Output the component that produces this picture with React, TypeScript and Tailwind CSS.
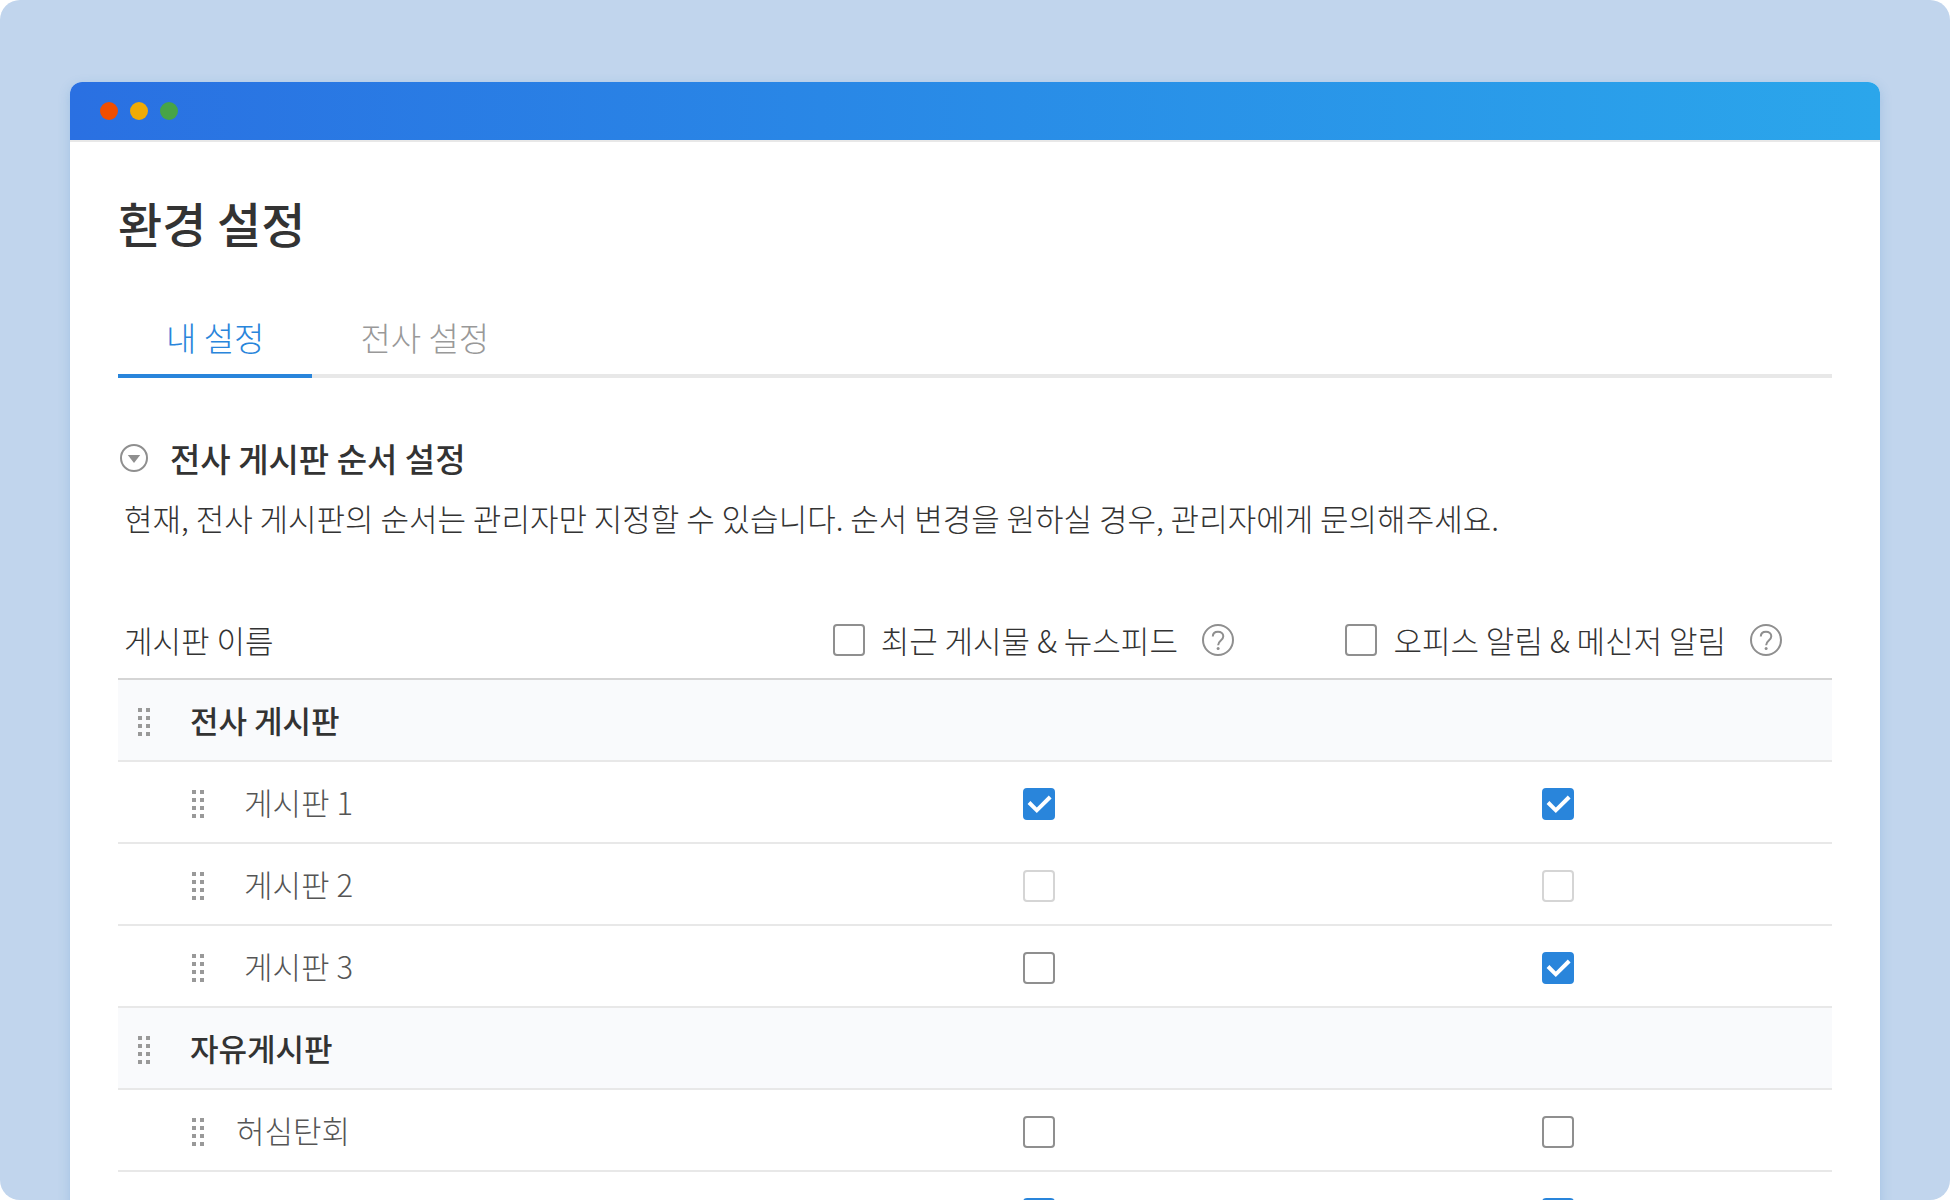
import React, { useState } from 'react';
import clsx from 'clsx';

type CheckState = 'on' | 'off' | 'disabled';

interface BoardRow {
  name: string;
  kind: 'group' | 'board';
  compact?: boolean;
  feed?: CheckState;
  alarm?: CheckState;
}

const rows: BoardRow[] = [
  { name: '전사 게시판', kind: 'group' },
  { name: '게시판 1', kind: 'board', feed: 'on', alarm: 'on' },
  { name: '게시판 2', kind: 'board', feed: 'disabled', alarm: 'disabled' },
  { name: '게시판 3', kind: 'board', feed: 'off', alarm: 'on' },
  { name: '자유게시판', kind: 'group' },
  { name: '허심탄회', kind: 'board', compact: true, feed: 'off', alarm: 'off' },
  { name: '', kind: 'board', feed: 'on', alarm: 'on' }
];

const tabs = ['내 설정', '전사 설정'];

const Checkbox: React.FC<{ state?: CheckState; id?: string; label?: string }> = ({ state = 'off', id, label }) => {
  const [checked, setChecked] = useState(state === 'on');

  return (
    <span className="relative block size-8 shrink-0">
      <input
        id={id}
        type="checkbox"
        aria-label={label}
        checked={checked}
        disabled={state === 'disabled'}
        onChange={(e) => setChecked(e.target.checked)}
        className="block size-8 appearance-none rounded border-2 border-[#8f8f8f] bg-white checked:border-[#2985db] checked:bg-[#2985db] disabled:border-[#d5d5d5]"
      />
      {checked && (
        <svg viewBox="0 0 32 32" className="pointer-events-none absolute inset-0 size-8" fill="none" stroke="white" strokeWidth="4">
          <path d="M6 14.5 13.8 22.3 27.2 9" />
        </svg>
      )}
    </span>
  );
};

const DragHandle: React.FC = () => (
  <button type="button" aria-label="순서 변경" className="mt-1 block shrink-0 cursor-move">
    <svg width="12" height="28" viewBox="0 0 12 28" fill="#999" className="block">
      {[0, 8, 16, 24].map((y) => (
        <React.Fragment key={y}>
          <rect x="0" y={y} width="4" height="4" />
          <rect x="8" y={y} width="4" height="4" />
        </React.Fragment>
      ))}
    </svg>
  </button>
);

const HelpButton: React.FC = () => (
  <button type="button" aria-label="도움말" className="block shrink-0">
    <svg width="32" height="32" viewBox="0 0 32 32" fill="none" stroke="#8f8f8f" strokeWidth="2" className="block">
      <circle cx="16" cy="16" r="15" />
      <path d="M10.8 12.6C10.8 9.6 13 7.8 16 7.8s5.3 1.8 5.3 4.5c0 4.2-5.2 4.2-5.2 8.9" />
      <circle cx="16.1" cy="24.6" r="1.5" fill="#8f8f8f" stroke="none" />
    </svg>
  </button>
);

const HeaderCheck: React.FC<{ id: string; text: string }> = ({ id, text }) => (
  <div className="flex items-center justify-center whitespace-nowrap">
    <Checkbox id={id} />
    <label htmlFor={id} className="pl-4 pr-6">
      {text}
    </label>
    <HelpButton />
  </div>
);

const App: React.FC = () => {
  const [activeTab, setActiveTab] = useState(0);
  const [open, setOpen] = useState(true);

  return (
    <div className="bg-white">
      <div className="h-screen overflow-hidden rounded-[20px] bg-[#c1d5ed] px-[70px] pt-[82px] font-['Noto_Sans_CJK_KR',sans-serif] text-[#333]">
        <div className="min-h-full overflow-hidden rounded-t-xl bg-white shadow-[0_4px_12px_rgba(60,130,200,0.25)]">
          {/* Title bar */}
          <div className="flex h-15 items-center gap-3 border-b-2 border-[#e8e8e8] bg-linear-to-r from-[#2a70e2] to-[#2ba6eb] px-[30px]">
            <span className="size-[18px] rounded-full bg-[#f04e00]" />
            <span className="size-[18px] rounded-full bg-[#f0ab05]" />
            <span className="size-[18px] rounded-full bg-[#47a447]" />
          </div>

          <main className="px-12 pt-12">
            <h1 className="text-[48px] leading-[64px] font-medium">환경 설정</h1>

            {/* Tabs */}
            <div role="tablist" className="mt-[54px] flex border-b-4 border-[#e8e8e8]">
              {tabs.map((tab, index) => (
                <button
                  key={tab}
                  type="button"
                  role="tab"
                  aria-selected={activeTab === index}
                  onClick={() => setActiveTab(index)}
                  className={clsx(
                    '-mb-1 border-b-4 px-12 pb-2 text-[33px] leading-[58px] font-light',
                    activeTab === index ? 'border-[#2985db] text-[#2985db]' : 'border-transparent text-[#999]'
                  )}
                >
                  {tab}
                </button>
              ))}
            </div>

            {/* Board order */}
            <section className="pt-14">
              <div className="flex items-center gap-[22px] pl-0.5">
                <button type="button" aria-label="접기" aria-expanded={open} onClick={() => setOpen(!open)}>
                  <svg width="28" height="28" viewBox="0 0 28 28" className="block">
                    <circle cx="14" cy="14" r="13" fill="none" stroke="#8f8f8f" strokeWidth="2" />
                    <path d="M7.8 11h12.4L14 19z" fill="#8f8f8f" />
                  </svg>
                </button>
                <h2 className="text-[33px] leading-[48px] font-medium">전사 게시판 순서 설정</h2>
              </div>
              <p className="mt-3 pl-1.5 text-[31px] leading-[48px] font-light">
                현재, 전사 게시판의 순서는 관리자만 지정할 수 있습니다. 순서 변경을 원하실 경우, 관리자에게 문의해주세요.
              </p>

              {open && (
                <table className="mt-15 w-full table-fixed border-collapse text-[31px] leading-[48px] font-light">
                  <colgroup>
                    <col />
                    <col className="w-[28.5%]" />
                    <col className="w-[32%]" />
                  </colgroup>
                  <thead>
                    <tr className="h-[77px] border-b-2 border-[#d5d5d5]">
                      <th scope="col" className="p-0 pl-1.5 text-left font-light">게시판 이름</th>
                      <th scope="col" className="p-0 pr-3 font-light">
                        <HeaderCheck id="feed-all" text="최근 게시물 & 뉴스피드" />
                      </th>
                      <th scope="col" className="p-0 pl-3 font-light">
                        <HeaderCheck id="alarm-all" text="오피스 알림 & 메신저 알림" />
                      </th>
                    </tr>
                  </thead>
                  <tbody>
                    {rows.map((row, index) =>
                      row.kind === 'group' ? (
                        <tr key={index} className="h-[82px] border-b-2 border-[#e8e8e8] bg-[#f9fafc]">
                          <th scope="rowgroup" colSpan={3} className="p-0 text-left font-medium">
                            <div className="flex items-center gap-10 pl-5">
                              <DragHandle />
                              {row.name}
                            </div>
                          </th>
                        </tr>
                      ) : (
                        <tr key={index} className="h-[82px] border-b-2 border-[#e8e8e8]">
                          <th scope="row" className="p-0 text-left font-light text-[#555]">
                            <div className={clsx('flex items-center pl-[74px]', row.compact ? 'gap-8' : 'gap-10')}>
                              <DragHandle />
                              {row.name}
                            </div>
                          </th>
                          <td className="p-0 pt-1">
                            <div className="flex justify-center">
                              <Checkbox state={row.feed} label={`${row.name} 최근 게시물 & 뉴스피드`} />
                            </div>
                          </td>
                          <td className="p-0 pt-1">
                            <div className="flex justify-center">
                              <Checkbox state={row.alarm} label={`${row.name} 오피스 알림 & 메신저 알림`} />
                            </div>
                          </td>
                        </tr>
                      )
                    )}
                  </tbody>
                </table>
              )}
            </section>
          </main>
        </div>
      </div>
    </div>
  );
};

export default App;
